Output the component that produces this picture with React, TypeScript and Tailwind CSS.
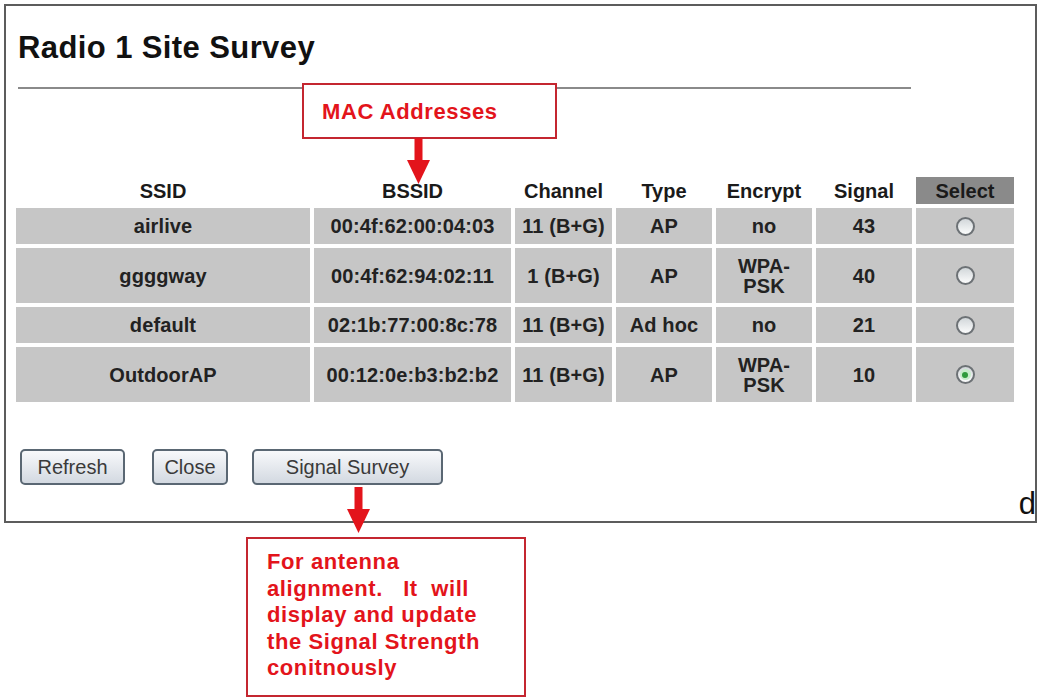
import React from 'react';

type Network = {
  ssid: string;
  bssid: string;
  channel: string;
  type: string;
  encrypt: string[];
  signal: number;
  selected?: boolean;
};

const networks: Network[] = [
  { ssid: 'airlive', bssid: '00:4f:62:00:04:03', channel: '11 (B+G)', type: 'AP', encrypt: ['no'], signal: 43 },
  { ssid: 'ggggway', bssid: '00:4f:62:94:02:11', channel: '1 (B+G)', type: 'AP', encrypt: ['WPA-', 'PSK'], signal: 40 },
  { ssid: 'default', bssid: '02:1b:77:00:8c:78', channel: '11 (B+G)', type: 'Ad hoc', encrypt: ['no'], signal: 21 },
  { ssid: 'OutdoorAP', bssid: '00:12:0e:b3:b2:b2', channel: '11 (B+G)', type: 'AP', encrypt: ['WPA-', 'PSK'], signal: 10, selected: true },
];

const headers = ['SSID', 'BSSID', 'Channel', 'Type', 'Encrypt', 'Signal'];

function Radio({ checked }: { checked?: boolean }) {
  return (
    <span className="flex h-[19px] w-[19px] items-center justify-center rounded-full border-2 border-[#6c7175] bg-gradient-to-b from-[#d2d7da] to-[#fbfcfc]">
      {checked && (
        <span className="flex h-[11px] w-[11px] items-center justify-center rounded-full bg-[#c6ecc9]">
          <span className="h-[6px] w-[6px] rounded-full bg-[#2e9b3b]" />
        </span>
      )}
    </span>
  );
}

function Cell({ children }: { children: React.ReactNode }) {
  return (
    <div className="flex flex-col items-center justify-center bg-[#c6c6c6] text-center text-[20px] font-bold leading-[20px] tracking-[0.1px] text-[#222]">
      {children}
    </div>
  );
}

function Button({ label, width }: { label: string; width: string }) {
  return (
    <button
      className={`${width} h-[36px] rounded-[5px] border-2 border-[#5a6773] bg-gradient-to-b from-[#f8f9fb] to-[#d3d9e1] text-[20px] leading-none text-[#3a3a3a]`}
    >
      {label}
    </button>
  );
}

function Arrow({ className }: { className: string }) {
  return (
    <svg className={className} viewBox="0 0 23 46" width="23" height="46">
      <rect x="7.5" y="0" width="8" height="24" fill="#e3141b" />
      <polygon points="0,22 23,22 11.5,46" fill="#e3141b" />
    </svg>
  );
}

export default function App() {
  return (
    <div className="relative h-[698px] w-[1040px] overflow-hidden bg-white font-['Liberation_Sans',Arial,sans-serif]">
      <div className="relative ml-[4px] mt-[4px] h-[519px] w-[1033px] border-2 border-[#5c5c5c]">
        <h1 className="ml-[12px] mt-[25px] h-[34px] text-[31px] font-bold leading-[34px] tracking-[0.4px] text-[#111]">
          Radio 1 Site Survey
        </h1>
        <div className="ml-[12px] mt-[22px] h-[2px] w-[893px] bg-[#8a8a8a]" />

        {/* survey results */}
        <div className="ml-[10px] mt-[88px] grid grid-cols-[294px_197px_97px_96px_96px_96px_98px] grid-rows-[27px_36px_55px_36px_55px] gap-[4px]">
          {headers.map((h) => (
            <div key={h} className="flex items-center justify-center text-[20px] font-bold text-[#1a1a1a]">
              {h}
            </div>
          ))}
          <div className="flex items-center justify-center bg-[#8a8a8a] text-[20px] font-bold text-[#1a1a1a]">
            Select
          </div>
          {networks.map((n) => (
            <React.Fragment key={n.bssid}>
              <Cell>{n.ssid}</Cell>
              <Cell>{n.bssid}</Cell>
              <Cell>{n.channel}</Cell>
              <Cell>{n.type}</Cell>
              <Cell>
                {n.encrypt.map((line) => (
                  <span key={line}>{line}</span>
                ))}
              </Cell>
              <Cell>{n.signal}</Cell>
              <Cell>
                <Radio checked={n.selected} />
              </Cell>
            </React.Fragment>
          ))}
        </div>

        <div className="ml-[14px] mt-[47px] flex">
          <Button label="Refresh" width="w-[105px]" />
          <div className="ml-[27px]">
            <Button label="Close" width="w-[76px]" />
          </div>
          <div className="ml-[24px]">
            <Button label="Signal Survey" width="w-[191px]" />
          </div>
        </div>

        <span className="absolute bottom-[2px] right-[-1px] text-[31px] leading-[30px] text-[#111]">d</span>
      </div>

      {/* callout: MAC addresses */}
      <div className="absolute left-[302px] top-[83px] flex h-[56px] w-[255px] items-center border-2 border-[#c42630] bg-white pl-[18px] text-[22px] font-bold tracking-[0.6px] text-[#e3141b]">
        MAC Addresses
      </div>
      <Arrow className="absolute left-[407px] top-[138px]" />

      {/* callout: signal survey */}
      <Arrow className="absolute left-[347px] top-[487px]" />
      <div className="ml-[246px] mt-[14px] h-[160px] w-[280px] border-2 border-[#c42630] pl-[19px] pt-[10px] text-[22px] font-bold leading-[26.5px] tracking-[0.6px] text-[#e3141b]">
        <div>For antenna</div>
        <div className="whitespace-pre">alignment.   It  will</div>
        <div>display and update</div>
        <div>the Signal Strength</div>
        <div>conitnously</div>
      </div>
    </div>
  );
}
